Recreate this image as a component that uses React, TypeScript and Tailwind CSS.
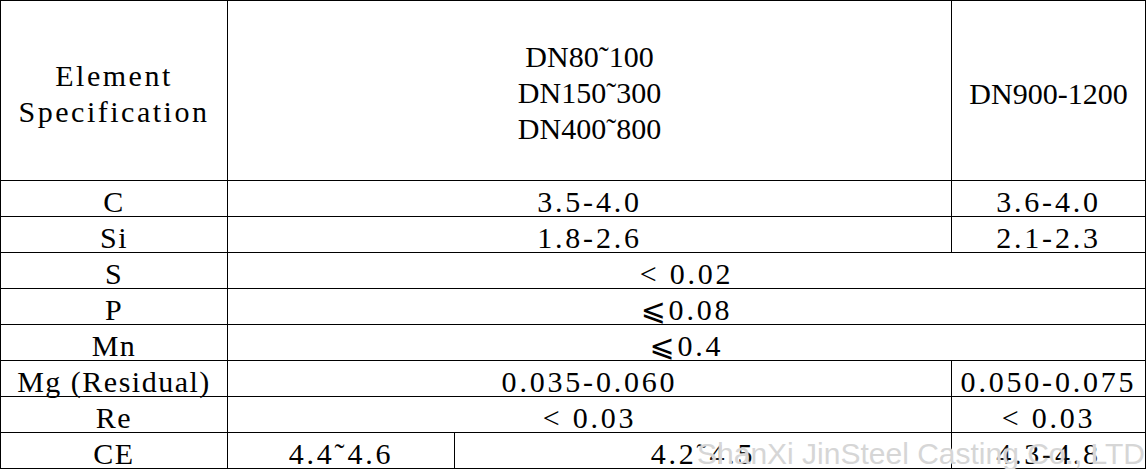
import React from 'react';

type Cell = { text: string; span?: number };

const rows: { label: string; cells: Cell[] }[] = [
  { label: 'C', cells: [{ text: '3.5-4.0', span: 2 }, { text: '3.6-4.0' }] },
  { label: 'Si', cells: [{ text: '1.8-2.6', span: 2 }, { text: '2.1-2.3' }] },
  { label: 'S', cells: [{ text: '< 0.02', span: 3 }] },
  { label: 'P', cells: [{ text: '⩽0.08', span: 3 }] },
  { label: 'Mn', cells: [{ text: '⩽0.4', span: 3 }] },
  { label: 'Mg (Residual)', cells: [{ text: '0.035-0.060', span: 2 }, { text: '0.050-0.075' }] },
  { label: 'Re', cells: [{ text: '< 0.03', span: 2 }, { text: '< 0.03' }] },
  { label: 'CE', cells: [{ text: '4.4˜4.6' }, { text: '4.2˜4.5' }, { text: '4.3-4.8' }] },
];

const cellCls = 'border border-black p-0 pt-[5px] text-center leading-[29px] whitespace-pre';

export default function App() {
  return (
    <div className="relative w-[1146px] h-[469px] overflow-hidden bg-white text-black font-['Liberation_Serif','DejaVu_Sans',serif] text-[30px] tracking-[1.5px]">
      <table className="table-fixed border-collapse w-[1145px]">
        <colgroup>
          <col className="w-[227px]" />
          <col className="w-[227px]" />
          <col className="w-[497px]" />
          <col className="w-[194px]" />
        </colgroup>
        <tbody>
          <tr className="h-[180px]">
            <td className="border border-black p-0 pt-[6px] text-center align-middle leading-[36px] whitespace-pre tracking-[2.5px]">
              <div>Element</div>
              <div>Specification</div>
            </td>
            <td colSpan={2} className="border border-black p-0 pt-[4px] text-center align-middle leading-[36px] tracking-normal">
              <div>DN80˜100</div>
              <div>DN150˜300</div>
              <div>DN400˜800</div>
            </td>
            <td className="border border-black p-0 pt-[6px] text-center align-middle leading-[36px] tracking-normal">
              DN900-1200
            </td>
          </tr>
          {rows.map((r) => (
            <tr key={r.label} className="h-[36px]">
              <td className={cellCls}>{r.label}</td>
              {r.cells.map((c, i) => (
                <td key={i} colSpan={c.span ?? 1} className={`${cellCls} tracking-[2.8px]`}>
                  {c.text}
                </td>
              ))}
            </tr>
          ))}
        </tbody>
      </table>
      {/* watermark over the bottom rows */}
      <div className="absolute left-[697px] top-[439px] whitespace-nowrap font-['Liberation_Sans',Arial,sans-serif] text-[30px] leading-none tracking-normal text-[#d6d6d6] [text-shadow:0_0_2px_#fff]">
        ShanXi JinSteel Casting Co., LTD
      </div>
    </div>
  );
}
